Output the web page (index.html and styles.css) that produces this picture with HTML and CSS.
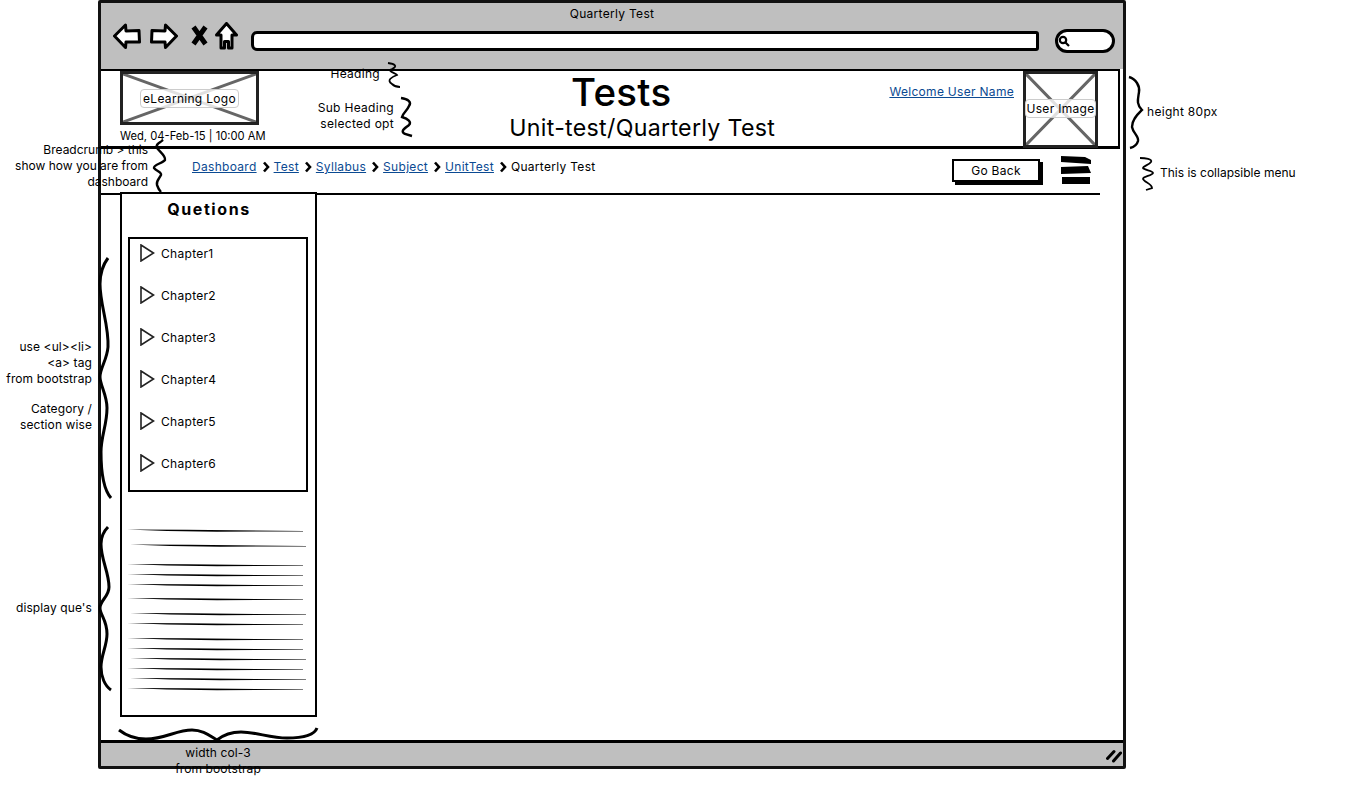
FILE: index.html
```html
<!DOCTYPE html>
<html lang="en">
<head>
    <meta charset="UTF-8">
    <meta name="viewport" content="width=device-width, initial-scale=1.0">
    <title>Quarterly Test</title>
    <link rel="stylesheet" href="styles.css">
</head>
<body>
<div class="canvas">

    <div class="window">
        <!-- Browser chrome -->
        <div class="chrome">
            <div class="chrome-title">Quarterly Test</div>
            <div class="toolbar">
                <svg class="tool tool-arrow" viewBox="0 0 28 26"><path d="M1.5 13 L12.5 2 L13 8 L26 7.5 L26.5 19 L13 19 L12.5 24.5 Z"/></svg>
                <svg class="tool tool-arrow" viewBox="0 0 28 26"><path d="M26.5 13 L15.5 2 L15 8 L2 7.5 L1.5 19 L15 19 L15.5 24.5 Z"/></svg>
                <svg class="tool tool-x" viewBox="0 0 17 21"><path d="M2.5 2 L14.5 19 M14.5 2 L2.5 19"/></svg>
                <svg class="tool tool-home" viewBox="0 0 23 28"><path d="M11.5 1.5 L21.5 13 L17 13 L17 26 L13.5 26 L13.5 19.5 L9.5 19.5 L9.5 26 L6 26 L6 13 L1.5 13 Z"/></svg>
                <div class="address"></div>
                <div class="search">
                    <svg class="search-icon" viewBox="0 0 12 12"><circle cx="5" cy="5" r="3.2"/><path d="M7.5 7.5 L11 11"/></svg>
                </div>
            </div>
        </div>

        <!-- Page header, height 80px -->
        <div class="header">
            <div class="brand">
                <div class="placeholder logo">
                    <svg class="cross" viewBox="0 0 100 100" preserveAspectRatio="none"><path d="M0 0 L100 100 M100 0 L0 100"/></svg>
                    <span class="placeholder-label logo-label">eLearning Logo</span>
                </div>
                <div class="date">Wed, 04-Feb-15 | 10:00 AM</div>
            </div>
            <div class="heading">
                <h1>Tests</h1>
                <h2>Unit-test/Quarterly Test</h2>
            </div>
            <a class="welcome" href="#">Welcome User Name</a>
            <div class="placeholder avatar">
                <svg class="cross" viewBox="0 0 100 100" preserveAspectRatio="none"><path d="M0 0 L100 100 M100 0 L0 100"/></svg>
                <span class="placeholder-label avatar-label">User Image</span>
            </div>
        </div>

        <!-- Breadcrumb row -->
        <div class="crumbs">
            <a href="#">Dashboard</a>
            <svg class="sep" viewBox="0 0 8 12"><path d="M2 1.5 L6 6 L2 10.5"/></svg>
            <a href="#">Test</a>
            <svg class="sep" viewBox="0 0 8 12"><path d="M2 1.5 L6 6 L2 10.5"/></svg>
            <a href="#">Syllabus</a>
            <svg class="sep" viewBox="0 0 8 12"><path d="M2 1.5 L6 6 L2 10.5"/></svg>
            <a href="#">Subject</a>
            <svg class="sep" viewBox="0 0 8 12"><path d="M2 1.5 L6 6 L2 10.5"/></svg>
            <a href="#">UnitTest</a>
            <svg class="sep" viewBox="0 0 8 12"><path d="M2 1.5 L6 6 L2 10.5"/></svg>
            <span>Quarterly Test</span>
            <button class="go-back">Go Back</button>
            <svg class="burger" viewBox="0 0 31 28"><path d="M1 0 L25 1 L31 4 L31 8 L1 6 Z M1 11 L28 10 L31 17 L1 18 Z M2 21 L30 21 L30 28 L2 28 Z"/></svg>
        </div>

        <!-- Main content -->
        <div class="main">
            <div class="sidebar">
                <div class="sidebar-title">Quetions</div>
                <ul class="chapters">
                    <li><svg class="play" viewBox="0 0 15 18"><path d="M1 1 L13.5 9 L1 17 Z"/></svg>Chapter1</li>
                    <li><svg class="play" viewBox="0 0 15 18"><path d="M1 1 L13.5 9 L1 17 Z"/></svg>Chapter2</li>
                    <li><svg class="play" viewBox="0 0 15 18"><path d="M1 1 L13.5 9 L1 17 Z"/></svg>Chapter3</li>
                    <li><svg class="play" viewBox="0 0 15 18"><path d="M1 1 L13.5 9 L1 17 Z"/></svg>Chapter4</li>
                    <li><svg class="play" viewBox="0 0 15 18"><path d="M1 1 L13.5 9 L1 17 Z"/></svg>Chapter5</li>
                    <li><svg class="play" viewBox="0 0 15 18"><path d="M1 1 L13.5 9 L1 17 Z"/></svg>Chapter6</li>
                </ul>
                <svg class="que-lines" viewBox="120 522 197 175">
                    <defs>
                        <path id="stroke" d="M0 0 L60 0.2 L176 1.6 L176 2 L90 2.2 L40 1.6 Z"/>
                    </defs>
                    <use href="#stroke" x="127" y="529.5"/>
                    <use href="#stroke" x="130" y="544.5"/>
                    <use href="#stroke" x="127" y="564"/>
                    <use href="#stroke" x="127" y="574"/>
                    <use href="#stroke" x="127" y="584"/>
                    <use href="#stroke" x="127" y="598"/>
                    <use href="#stroke" x="130" y="613"/>
                    <use href="#stroke" x="127" y="623"/>
                    <use href="#stroke" x="127" y="638"/>
                    <use href="#stroke" x="127" y="648"/>
                    <use href="#stroke" x="130" y="658"/>
                    <use href="#stroke" x="127" y="668"/>
                    <use href="#stroke" x="130" y="678"/>
                    <use href="#stroke" x="127" y="688"/>
                </svg>
            </div>
        </div>

        <div class="statusbar">
            <svg class="grip" viewBox="0 0 16 14"><path d="M1.5 9.5 L8 2.5 M7.5 12 L14.5 4"/></svg>
        </div>
    </div>

    <!-- Braces drawn on top of the wireframe -->
    <svg class="marks" viewBox="0 0 1351 807">
        <path class="thin" d="M388 63 C395 64 398 66 392 69 C386 71 396 73 397 75 C392 77 386 80 392 84 C394 86 396 87 400 87"/>
        <path d="M401 98 C408 99 412 102 409 106 C407 111 403 113 402 117 C408 119 412 122 409 125 C404 129 400 131 405 134 L412 136"/>
        <path d="M163 140 C160 143 155 144 157 148 C160 152 166 156 165 160 C163 163 153 165 154 168 C156 171 162 172 161 175 C159 179 156 181 157 185 C158 188 159 190 161 192"/>
        <path d="M1129 77 C1136 79 1140 86 1139 92 C1138 99 1136 104 1142 110 C1138 114 1132 119 1132 127 C1133 133 1139 136 1138 141 C1137 145 1134 147 1130 148"/>
        <path class="thin" d="M1140 158 C1145 158 1153 159 1151 162 C1149 165 1143 166 1143 168 C1144 170 1153 171 1153 173 C1152 176 1143 176 1143 179 C1144 182 1152 184 1152 188 L1146 190"/>
        <path class="tapered" d="M108 258 C102 266 100 274 100 284 C100 305 109 325 108 347 C107 360 100 368 100 377 C100 385 107 395 107 408 C107 425 101 436 101 452 C101 475 104 490 111 498"/>
        <path class="tapered" d="M108 527 C103 532 101 537 101 544 C101 560 109 572 109 587 C109 597 100 600 100 608 C100 615 107 620 107 634 C107 646 101 655 101 667 C101 677 105 686 111 690"/>
        <path class="tapered" d="M119 730 C128 737 136 739 146 739 C165 739 176 730 192 730 C203 730 210 736 217 740 C222 736 230 732 241 732 C256 732 270 738 287 738 C302 738 314 736 317 728"/>
    </svg>

    <!-- Annotations -->
    <div class="note note-heading">Heading</div>
    <div class="note note-sub">Sub Heading<br>selected opt</div>
    <div class="note note-crumb">Breadcrumb &gt; this<br>show how you are from<br>dashboard</div>
    <div class="note note-ul">use &lt;ul&gt;&lt;li&gt;<br>&lt;a&gt; tag<br>from bootstrap</div>
    <div class="note note-cat">Category /<br>section wise</div>
    <div class="note note-que">display que's</div>
    <div class="note note-col">width col-3<br>from bootstrap</div>
    <div class="note note-height">height 80px</div>
    <div class="note note-menu">This is collapsible menu</div>

</div>
</body>
</html>
```

FILE: styles.css
```css
body {
    margin: 0;
    background-color: white;
    color: #000;
    font-family: Inter, "Noto Sans", sans-serif;
    font-size: 12px;
    letter-spacing: 0.3px;
}

.canvas {
    position: relative;
    width: 1351px;
    height: 807px;
    overflow: hidden;
}

.window {
    box-sizing: border-box;
    display: flex;
    flex-direction: column;
    width: 1028px;
    height: 769px;
    margin-left: 98px;
    border: 3px solid #111;
    border-radius: 2px;
}

/* Browser chrome */
.chrome {
    height: 66px;
    background-color: #bfbfbf;
}

.chrome-title {
    padding-top: 3px;
    line-height: 16px;
    text-align: center;
}

.toolbar {
    display: flex;
    align-items: center;
    height: 36px;
    margin-top: -4px;
    padding-left: 12px;
}

.tool {
    flex: none;
    fill: white;
    stroke: #000;
    stroke-width: 3;
    stroke-linejoin: round;
}

.tool-arrow {
    width: 28px;
    height: 26px;
    margin-right: 9px;
}

.tool-x {
    width: 17px;
    height: 21px;
    margin: 0 7px 2px 4px;
    fill: none;
    stroke-width: 5;
}

.tool-home {
    width: 23px;
    height: 28px;
    margin-right: 13px;
}

.address {
    flex: none;
    box-sizing: border-box;
    width: 788px;
    height: 20px;
    margin-top: 9px;
    background-color: white;
    border: 3px solid #000;
    border-radius: 6px 3px 3px 6px;
}

.search {
    flex: none;
    box-sizing: border-box;
    display: flex;
    align-items: center;
    width: 60px;
    height: 24px;
    margin: 9px 0 0 16px;
    padding-left: 0;
    background-color: white;
    border: 3px solid #000;
    border-radius: 12px;
}

.search-icon {
    width: 12px;
    height: 12px;
    fill: none;
    stroke: #000;
    stroke-width: 2.2;
}

/* Header */
.header {
    box-sizing: border-box;
    display: flex;
    height: 80px;
    margin-right: 3px;
    padding-left: 19px;
    border-top: 2px solid #000;
    border-right: 2px solid #000;
    border-bottom: 3px solid #000;
}

.brand {
    flex: none;
    width: 147px;
}

.placeholder {
    box-sizing: border-box;
    position: relative;
    display: flex;
    align-items: center;
    justify-content: center;
    border: 3px solid #222;
}

.logo {
    width: 139px;
    height: 54px;
}

.avatar {
    flex: none;
    width: 75px;
    height: 77px;
    margin: 0 20px 0 9px;
}

.cross {
    position: absolute;
    top: 0;
    left: 0;
    width: 100%;
    height: 100%;
    fill: none;
    stroke: #666;
    stroke-width: 3;
}

.cross path {
    vector-effect: non-scaling-stroke;
}

.placeholder-label {
    position: relative;
    white-space: nowrap;
    line-height: 17px;
    background-color: rgba(255, 255, 255, 0.8);
    border: 1px solid #ccc;
    border-radius: 4px;
}

.logo-label {
    padding: 0 2px;
}

.avatar-label {
    margin: -2px -3px 0;
    padding: 0 1px;
}

.date {
    margin-top: 3px;
    line-height: 16px;
    white-space: nowrap;
    font-size: 11.2px;
    letter-spacing: 0;
}

.heading {
    flex: 1;
    padding-left: 128px;
    text-align: center;
}

.heading h1 {
    margin: -1px 42px 0 0;
    font-size: 38.5px;
    font-weight: 500;
    line-height: 44px;
}

.heading h2 {
    margin: 1px 0 0;
    font-size: 23.2px;
    font-weight: 400;
    line-height: 26px;
    white-space: nowrap;
}

.welcome {
    flex: none;
    margin-top: 13px;
    color: #0b4a92;
    line-height: 16px;
}

/* Breadcrumbs */
.crumbs {
    box-sizing: border-box;
    display: flex;
    flex: none;
    align-items: center;
    height: 46px;
    margin-right: 23px;
    padding: 0 9px 9px 91px;
    border-bottom: 2px solid #000;
}

.crumbs a {
    color: #0b4a92;
}

.sep {
    width: 8px;
    height: 12px;
    margin: 0 4px 0 5px;
    fill: none;
    stroke: #000;
    stroke-width: 2.6;
}

.go-back {
    box-sizing: border-box;
    width: 88px;
    height: 23px;
    margin: 8px 0 0 auto;
    padding: 0;
    font-family: inherit;
    font-size: 12px;
    letter-spacing: inherit;
    background-color: white;
    border: 2px solid #000;
    box-shadow: 3px 3px 0 #000;
}

.burger {
    width: 31px;
    height: 28px;
    margin: 7px 0 0 20px;
}

/* Sidebar */
.main {
    flex: 1;
    min-height: 0;
    padding-left: 19px;
}

.sidebar {
    box-sizing: border-box;
    width: 197px;
    height: 525px;
    margin-top: -3px;
    background-color: white;
    border: 2px solid #000;
    position: relative;
}

.sidebar-title {
    padding: 5px 19px 0 0;
    font-size: 16px;
    font-weight: 700;
    line-height: 20px;
    letter-spacing: 1.6px;
    text-align: center;
}

.chapters {
    box-sizing: border-box;
    height: 255px;
    margin: 18px 7px 0 6px;
    padding: 1px 0 0 10px;
    list-style: none;
    border: 2px solid #000;
}

.chapters li {
    display: flex;
    align-items: center;
    height: 26px;
    margin-bottom: 16px;
}

.play {
    width: 15px;
    height: 18px;
    margin-right: 6px;
    fill: none;
    stroke: #222;
    stroke-width: 1.6;
}

.que-lines {
    display: block;
    width: 197px;
    height: 175px;
    margin: 30px 0 0 -2px;
}

/* Status bar */
.statusbar {
    box-sizing: border-box;
    display: flex;
    flex: none;
    align-items: center;
    justify-content: flex-end;
    height: 26px;
    padding: 3px 1px 0 0;
    background-color: #bfbfbf;
    border-top: 3px solid #000;
}

.grip {
    width: 16px;
    height: 14px;
    fill: none;
    stroke: #000;
    stroke-width: 3;
    stroke-linecap: round;
}

/* Annotations */
.marks {
    position: absolute;
    top: 0;
    left: 0;
    width: 1351px;
    height: 807px;
    fill: none;
    stroke: #000;
    stroke-width: 2.4;
    pointer-events: none;
}

.marks .thin {
    stroke-width: 1.8;
}

.marks .tapered {
    stroke-width: 3;
}

.note {
    position: absolute;
    line-height: 16px;
    white-space: nowrap;
    letter-spacing: 0.1px;
}

.note-heading {
    top: 66px;
    left: 280px;
    width: 100px;
    text-align: right;
    letter-spacing: 0.3px;
}

.note-sub {
    top: 100px;
    left: 294px;
    width: 100px;
    text-align: right;
    letter-spacing: 0.3px;
}

.note-crumb {
    top: 142px;
    left: 0;
    width: 148px;
    text-align: right;
    letter-spacing: 0;
}

.note-ul {
    top: 339px;
    left: 0;
    width: 92px;
    text-align: right;
}

.note-cat {
    top: 401px;
    left: 0;
    width: 92px;
    text-align: right;
}

.note-que {
    top: 600px;
    left: 0;
    width: 92px;
    text-align: right;
}

.note-col {
    top: 745px;
    left: 118px;
    width: 200px;
    text-align: center;
}

.note-height {
    top: 104px;
    left: 1147px;
    letter-spacing: 0.3px;
}

.note-menu {
    top: 165px;
    left: 1160px;
    letter-spacing: 0;
}
```
